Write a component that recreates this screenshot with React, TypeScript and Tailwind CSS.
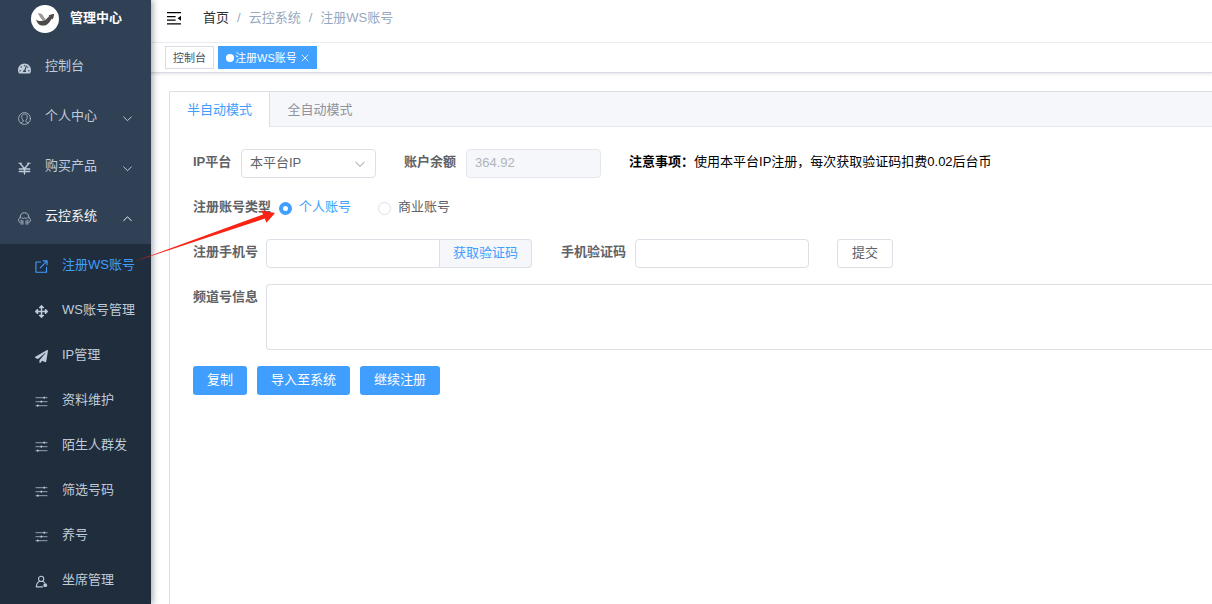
// App.tsx
import React, { useState } from 'react';
import { FaArrowsAlt, FaPaperPlane, FaTachometerAlt } from 'react-icons/fa';

type IconProps = { className?: string };

const stroke = {
  fill: 'none',
  stroke: 'currentColor',
  strokeLinecap: 'round' as const,
  strokeLinejoin: 'round' as const,
};

const UserCircleIcon: React.FC<IconProps> = ({ className }) => (
  <svg className={className} viewBox="0 0 14 14" {...stroke} strokeWidth="0.8">
    <circle cx="7" cy="7" r="6.4" />
    <path d="M5.400 8.800C4.400 8 4 6.600 4 5.200 4 3.200 5.200 2.200 7 2.200s3 1 3 3c0 1.400-.4 2.800-1.400 3.600v1.400c.2.900 1.200 1 2.400 1.600M5.400 8.800v1.400c-.2.900-1.200 1-2.400 1.600" />
  </svg>
);

const YenIcon: React.FC<IconProps> = ({ className }) => (
  <svg className={className} viewBox="0 0 14 14" {...stroke} strokeWidth="1.5">
    <path d="M2.400 1.600 7 7.200l4.600-5.600M7 7.200v5.800M1.400 7.600h11.200M1.400 10.200h11.200" />
    <path d="M.8 1.300h3.200M10 1.300h3.200" strokeWidth="1" />
  </svg>
);

const ServiceIcon: React.FC<IconProps> = ({ className }) => (
  <svg className={className} viewBox="0 0 14 14" {...stroke} strokeWidth="0.9">
    <path d="M2.400 6.200V5.400C2.400 2.600 4.400.8 7 .8s4.600 1.800 4.600 4.600v.8" />
    <path d="M2.400 6.200C1.200 6.600.6 7.500.6 8.800s.5 2 1.500 2.400M11.600 6.200c1.200.4 1.800 1.300 1.800 2.600s-.5 2-1.500 2.400" />
    <path d="M4.200 6.200c1 1 1.900 1 2.800.1.900.9 1.800.9 2.800-.1M3.400 8.600v4.600M5.300 9.400v3.800M10.600 8.600v4.600M8.700 9.400v3.800" />
  </svg>
);

const LinkOutIcon: React.FC<IconProps> = ({ className }) => (
  <svg className={className} viewBox="0 0 14 14" {...stroke} strokeWidth="1.200">
    <path d="M6 2.200H1v11h11.400V8M5.600 8.400l7-7M8.800 1h4.200v4.200" />
  </svg>
);

const SlidersIcon: React.FC<IconProps> = ({ className }) => (
  <svg className={className} viewBox="0 0 14 14" {...stroke} strokeWidth="0.8">
    <path d="M1 2.900h12M1 7.200h12M1 11.500h12" />
    <path d="M9.900 2.500v.8M6.800 6.800v.8M3 11.100v.8" strokeWidth="1.700" />
  </svg>
);

const SeatIcon: React.FC<IconProps> = ({ className }) => (
  <svg className={className} viewBox="0 0 14 14" {...stroke} strokeWidth="1.200">
    <circle cx="6.600" cy="4.200" r="2.800" />
    <path d="M5 6.800C2.800 7.800 1.600 9.800 1.400 12.800h6.800M8.300 6.800c.8.4 1.400.9 1.900 1.600" />
    <circle cx="11" cy="11" r="2" fill="currentColor" stroke="none" />
  </svg>
);

const Chevron: React.FC<{ up?: boolean; className?: string }> = ({ up, className }) => (
  <svg className={className} viewBox="0 0 10 10" {...stroke} strokeWidth="0.9">
    <path d={up ? 'M1.500 7l3.500-3.500L8.500 7' : 'M1.500 3.500L5 7l3.500-3.500'} />
  </svg>
);

const FoldIcon: React.FC<IconProps> = ({ className }) => (
  <svg className={className} viewBox="0 0 14 14" fill="currentColor">
    <path d="M0 1h14v1.300H0zM0 5h8.600v1.200H0zM0 8.600h8.600v1.200H0zM0 12.200h14v1.300H0zM14 4.700v5L10.600 7.200z" />
  </svg>
);

const Logo: React.FC = () => (
  <svg className="h-7 w-7 shrink-0" viewBox="0 0 28 28">
    <circle cx="14" cy="14" r="14" fill="#fff" />
    <path d="M6.600 8.200c2.600-.3 4.300.4 5.400 2.200.8 1.300 1.200 2.800 2.600 3.200l-1.200 2C9.800 15.200 8.900 11 6.600 8.200z" fill="#9a9896" />
    <path d="M5 14.400c1.800 1.500 4.800 2 7.700 1.100 3-.9 4.300-3.700 5.700-4.600l-.8-.7 5.400-1.400c.1 2.400-.6 4.400-1.800 5.800l-.8-.9c-1.400 3.400-3.800 6.500-8 6.900-3.600.3-6.400-2.300-7.400-6.200z" fill="#4d4a48" />
  </svg>
);

const menus = [
  { name: '控制台', icon: FaTachometerAlt },
  { name: '个人中心', icon: UserCircleIcon, arrow: true },
  { name: '购买产品', icon: YenIcon, arrow: true },
  { name: '云控系统', icon: ServiceIcon, arrow: true, open: true },
];

const subMenus = [
  { name: '注册WS账号', icon: LinkOutIcon, active: true },
  { name: 'WS账号管理', icon: FaArrowsAlt },
  { name: 'IP管理', icon: FaPaperPlane },
  { name: '资料维护', icon: SlidersIcon },
  { name: '陌生人群发', icon: SlidersIcon },
  { name: '筛选号码', icon: SlidersIcon },
  { name: '养号', icon: SlidersIcon },
  { name: '坐席管理', icon: SeatIcon },
];

const Sidebar: React.FC = () => (
  <aside className="z-10 w-[151px] shrink-0 bg-[#304156] text-[#bfcbd9] shadow-[2px_0_6px_rgba(0,21,41,0.35)]">
    <div className="flex h-[42px] items-center gap-[11px] pb-1 pl-[31px] font-bold text-white">
      <Logo />
      <span className="pb-0.5">管理中心</span>
    </div>
    <nav>
      <div className="pb-0.5">
        {menus.map((m) => (
          <a
            key={m.name}
            href="#"
            className={`flex h-[50px] items-center px-[18px] ${m.open ? 'text-[#f4f4f5]' : ''}`}
          >
            <m.icon className="mt-0.5 h-[13px] w-[13px] shrink-0 text-[#bfcbd9]" />
            <span className="ml-[14px] flex-1 pb-0.5">{m.name}</span>
            {m.arrow && <Chevron up={m.open} className="mt-0.5 h-[11px] w-[11px]" />}
          </a>
        ))}
      </div>
      <div className="bg-[#1f2d3d]">
        {subMenus.map((m) => (
          <a
            key={m.name}
            href="#"
            className={`flex h-[45px] items-center gap-[14px] pb-1 pl-[35px] ${m.active ? 'text-[#409eff]' : ''}`}
          >
            <m.icon className="mt-1 h-[13px] w-[13px] shrink-0" />
            <span>{m.name}</span>
          </a>
        ))}
      </div>
    </nav>
  </aside>
);

const labelCls = 'shrink-0 whitespace-nowrap pb-1 font-bold text-[#606266]';
const inputCls = 'h-[29px] rounded-[4px] border border-[#dcdfe6] bg-white px-2 text-[#606266] outline-none';
const primaryCls = 'h-[29px] rounded-[3px] bg-[#409eff] px-[14px] pb-0.5 text-white';

const App: React.FC = () => {
  const [tab, setTab] = useState('half');
  const [kind, setKind] = useState('personal');

  const tabs = [
    { id: 'half', name: '半自动模式' },
    { id: 'full', name: '全自动模式' },
  ];
  const kinds = [
    { id: 'personal', name: '个人账号' },
    { id: 'business', name: '商业账号' },
  ];

  return (
    <div className="relative flex min-h-screen overflow-hidden bg-white font-['Liberation_Sans','Noto_Sans_CJK_SC',sans-serif] text-[13px] leading-5">
      <Sidebar />

      <main className="flex min-w-0 flex-1 flex-col">
        <header className="flex h-[43px] items-center border-b border-[#f0f1f4] pb-1.5 pl-4">
          <button aria-label="收起菜单" className="text-black">
            <FoldIcon className="h-[14px] w-[14px]" />
          </button>
          <nav className="ml-[22px] flex gap-2 text-[#97a8be]">
            <a href="#" className="text-[#303133]">首页</a>
            <span>/</span>
            <span>云控系统</span>
            <span>/</span>
            <span>注册WS账号</span>
          </nav>
        </header>

        <div className="flex h-[30px] items-center gap-1 border-b border-[#d8dce5] pl-[14px] text-[11px] shadow-[0_1px_3px_rgba(0,0,0,0.12)]">
          <a href="#" className="flex h-[23px] items-center border border-[#d8dce5] px-[7px] text-[#495060]">控制台</a>
          <a href="#" className="flex h-[23px] items-center bg-[#42a0ff] px-2 text-white">
            <span className="mr-px h-2 w-2 rounded-full bg-white" />
            注册WS账号
            <svg className="ml-1 h-2 w-2" viewBox="0 0 8 8" {...stroke} strokeWidth="0.8">
              <path d="M1 1l6 6M7 1L1 7" />
            </svg>
          </a>
        </div>

        <section className="ml-[18px] mt-[18px] flex-1 border-l border-t border-[#dcdfe6]">
          <div className="flex h-[35px] border-b border-[#e4e7ed] bg-[#f5f7fa]" role="tablist">
            {tabs.map((t) => (
              <button
                key={t.id}
                role="tab"
                aria-selected={tab === t.id}
                onClick={() => setTab(t.id)}
                className={
                  tab === t.id
                    ? 'h-[35px] w-[100px] border-r border-[#dcdfe6] bg-white text-[#409eff]'
                    : 'h-[35px] w-[100px] text-[#909399]'
                }
              >
                {t.name}
              </button>
            ))}
          </div>

          <form className="flex flex-col gap-4 pl-[23px] pt-[22px]" onSubmit={(e) => e.preventDefault()}>
            <div className="flex h-[29px] items-center">
              <label htmlFor="platform" className={`${labelCls} w-12`}>IP平台</label>
              <div className="relative w-[135px]">
                <select id="platform" className={`${inputCls} w-full appearance-none pb-0.5`}>
                  <option>本平台IP</option>
                </select>
                <Chevron className="pointer-events-none absolute right-[10px] top-[9px] h-3 w-3 text-[#b4b8c0]" />
              </div>
              <label htmlFor="balance" className={`${labelCls} ml-7 w-[62px]`}>账户余额</label>
              <input
                id="balance"
                disabled
                value="364.92"
                className="h-[29px] w-[135px] rounded-[4px] border border-[#e4e7ed] bg-[#f5f7fa] px-2 pb-0.5 text-[#b0b4bb]"
              />
              <p className="ml-7 whitespace-nowrap pb-1 text-black">
                <b>注意事项：</b>使用本平台IP注册，每次获取验证码扣费0.02后台币
              </p>
            </div>

            <div className="flex h-[29px] items-center" role="radiogroup" aria-labelledby="kind-label">
              <span id="kind-label" className={`${labelCls} w-[86px]`}>注册账号类型</span>
              {kinds.map((k) => (
                <label
                  key={k.id}
                  className={`mr-[27px] flex items-center gap-[7px] ${kind === k.id ? 'text-[#409eff]' : 'text-[#606266]'}`}
                >
                  <input
                    type="radio"
                    name="kind"
                    checked={kind === k.id}
                    onChange={() => setKind(k.id)}
                    className="h-[13px] w-[13px] appearance-none rounded-full border border-[#dcdfe6] bg-white checked:border-[4px] checked:border-[#409eff]"
                  />
                  <span className="pb-1">{k.name}</span>
                </label>
              ))}
            </div>

            <div className="flex h-[29px] items-center">
              <label htmlFor="phone" className={`${labelCls} w-[73px]`}>注册手机号</label>
              <input id="phone" className={`${inputCls} w-[174px] rounded-r-none`} />
              <button
                type="button"
                className="h-[29px] w-[92px] rounded-r-[4px] border border-l-0 border-[#dcdfe6] bg-[#f5f7fa] pb-0.5 text-[#409eff]"
              >
                获取验证码
              </button>
              <label htmlFor="code" className={`${labelCls} ml-[29px] w-[74px]`}>手机验证码</label>
              <input id="code" className={`${inputCls} w-[174px]`} />
              <button
                type="submit"
                className="ml-7 h-[29px] rounded-[3px] border border-[#dcdfe6] bg-white px-[14px] pb-0.5 text-[#606266]"
              >
                提交
              </button>
            </div>

            <div className="flex items-start">
              <label htmlFor="info" className={`${labelCls} w-[73px] pt-[3px]`}>频道号信息</label>
              <textarea
                id="info"
                className="h-[66px] min-w-0 flex-1 resize-none rounded-l-[4px] border border-r-0 border-[#dcdfe6] px-3 py-1 text-[#606266] outline-none"
              />
            </div>

            <div className="flex gap-[10px]">
              <button type="button" className={primaryCls}>复制</button>
              <button type="button" className={primaryCls}>导入至系统</button>
              <button type="button" className={primaryCls}>继续注册</button>
            </div>
          </form>
        </section>
      </main>

      {/* pointer from the menu entry to the account type */}
      <svg className="pointer-events-none absolute left-[130px] top-[205px] z-20 h-[60px] w-[150px]" viewBox="0 0 150 60">
        <path d="M3 57 133 9.500 131.500 5.500 145 8 136.500 17.700 134.800 13.600z" fill="#fb2314" />
      </svg>
    </div>
  );
};

export default App;
